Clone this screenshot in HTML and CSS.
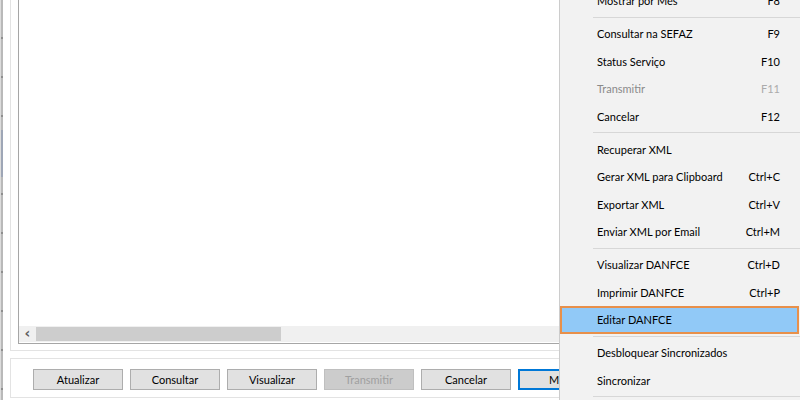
FILE: index.html
```html
<!DOCTYPE html>
<html lang="pt-BR">
<head>
<meta charset="utf-8">
<title>NFC-e</title>
<link rel="stylesheet" href="styles.css">
</head>
<body>
<div class="screen">
  <div class="strip">
    <div class="strip-sel"></div>
  </div>
  <div class="main">
    <div class="group">
      <div class="listbox">
        <div class="list-area"></div>
        <div class="hscroll">
          <span class="arrow">&lsaquo;</span>
          <div class="thumb"></div>
        </div>
      </div>
    </div>
    <div class="toolbar">
      <button class="btn">Atualizar</button>
      <button class="btn">Consultar</button>
      <button class="btn">Visualizar</button>
      <button class="btn btn-disabled" disabled>Transmitir</button>
      <button class="btn">Cancelar</button>
      <button class="btn btn-default">Menu</button>
    </div>
  </div>

  <div class="menu">
    <div class="mi"><span>Mostrar por Mês</span><span class="sc">F8</span></div>
    <div class="sep"></div>
    <div class="mi"><span>Consultar na SEFAZ</span><span class="sc">F9</span></div>
    <div class="mi"><span>Status Serviço</span><span class="sc">F10</span></div>
    <div class="mi mi-disabled"><span>Transmitir</span><span class="sc">F11</span></div>
    <div class="mi"><span>Cancelar</span><span class="sc">F12</span></div>
    <div class="sep"></div>
    <div class="mi"><span>Recuperar XML</span><span class="sc"></span></div>
    <div class="mi"><span>Gerar XML para Clipboard</span><span class="sc">Ctrl+C</span></div>
    <div class="mi"><span>Exportar XML</span><span class="sc">Ctrl+V</span></div>
    <div class="mi"><span>Enviar XML por Email</span><span class="sc">Ctrl+M</span></div>
    <div class="sep"></div>
    <div class="mi"><span>Visualizar DANFCE</span><span class="sc">Ctrl+D</span></div>
    <div class="mi"><span>Imprimir DANFCE</span><span class="sc">Ctrl+P</span></div>
    <div class="mi mi-hot"><span>Editar DANFCE</span><span class="sc"></span></div>
    <div class="sep"></div>
    <div class="mi"><span>Desbloquear Sincronizados</span><span class="sc"></span></div>
    <div class="mi"><span>Sincronizar</span><span class="sc"></span></div>
    <div class="sep"></div>
  </div>
</div>
</body>
</html>
```

FILE: styles.css
```css
* { box-sizing: border-box; }

html, body {
  margin: 0;
  padding: 0;
  background: #ffffff;
}

body {
  font-family: Lato, "Noto Sans", Arial, sans-serif;
  font-size: 11px;
  color: #000;
}

.screen {
  position: relative;
  width: 800px;
  height: 400px;
  overflow: hidden;
  display: flex;
  background: #ffffff;
}

.strip {
  width: 3px;
  flex: none;
  border-left: 1px solid #dcdcdc;
  background: repeating-linear-gradient(to bottom,
    #b9b9b9 0px, #b9b9b9 37px, #8e8e8e 37px, #8e8e8e 39px);
  position: relative;
}

.strip-sel {
  margin-top: 130px;
  height: 47px;
  background: #9ea6b6;
}

.main {
  flex: 1;
  margin-left: 7px;
  display: flex;
  flex-direction: column;
}

.group {
  height: 351px;
  border-left: 1px solid #e3e3e3;
  border-bottom: 1px solid #e3e3e3;
  padding-left: 7px;
  padding-bottom: 6px;
  display: flex;
}

.listbox {
  flex: 1;
  display: flex;
  flex-direction: column;
  border-left: 1px solid #a6a6a6;
  border-bottom: 1px solid #a6a6a6;
}

.list-area {
  flex: 1;
  background: #fff;
}

.hscroll {
  height: 16px;
  margin-bottom: 1px;
  background: #f0f0f0;
  display: flex;
  align-items: center;
}

.arrow {
  width: 17px;
  text-align: center;
  font-family: "DejaVu Sans", sans-serif;
  font-size: 14px;
  font-weight: bold;
  color: #606060;
  line-height: 14px;
  padding-bottom: 2px;
}

.thumb {
  width: 245px;
  height: 14px;
  background: #cdcdcd;
}

.toolbar {
  margin-top: 7px;
  height: 40px;
  border-left: 1px solid #e3e3e3;
  border-top: 1px solid #e3e3e3;
  border-bottom: 1px solid #e3e3e3;
  padding: 10px 0 0 22px;
  display: flex;
  gap: 7px;
  align-items: flex-start;
}

.btn {
  width: 90px;
  height: 21px;
  flex: none;
  font-family: inherit;
  font-size: 11px;
  color: #000;
  background: #e1e1e1;
  border: 1px solid #adadad;
  border-radius: 0;
  padding: 0;
  line-height: 18px;
}

.btn-disabled {
  background: #cccccc;
  border-color: #bfbfbf;
  color: #a0a0a0;
}

.btn-default {
  border: 2px solid #0078d7;
  background: #e1e1e1;
}

.menu {
  position: absolute;
  left: 559px;
  top: -13px;
  width: 241px;
  background: #f2f2f2;
  border-left: 1px solid #cccccc;
}

.mi {
  height: 27.5px;
  display: flex;
  align-items: center;
  justify-content: space-between;
  padding-left: 37px;
  padding-right: 20px;
  white-space: nowrap;
}

.mi-disabled { color: #8a8a8a; }
.mi-disabled .sc { color: #ababab; }

.mi-hot {
  background: #91c9f7;
  border: 2px solid #e8904a;
  padding-left: 35px;
  margin-right: 1px;
}

.sep {
  height: 5.5px;
  margin-left: 33px;
  padding-top: 2px;
}

.sep::before {
  content: "";
  display: block;
  height: 1px;
  background: #d7d7d7;
}
```
